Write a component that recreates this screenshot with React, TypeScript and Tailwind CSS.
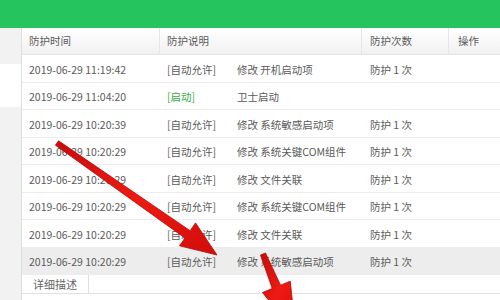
import React from "react";

type Row = { time: string; tag: string; green?: boolean; desc: string; count: string; sel?: boolean };

const rows: Row[] = [
  { time: "2019-06-29 11:19:42", tag: "[自动允许]", desc: "修改 开机启动项", count: "防护 1 次" },
  { time: "2019-06-29 11:04:20", tag: "[启动]", green: true, desc: "卫士启动", count: "" },
  { time: "2019-06-29 10:20:39", tag: "[自动允许]", desc: "修改 系统敏感启动项", count: "防护 1 次" },
  { time: "2019-06-29 10:20:29", tag: "[自动允许]", desc: "修改 系统关键COM组件", count: "防护 1 次" },
  { time: "2019-06-29 10:20:29", tag: "[自动允许]", desc: "修改 文件关联", count: "防护 1 次" },
  { time: "2019-06-29 10:20:29", tag: "[自动允许]", desc: "修改 系统关键COM组件", count: "防护 1 次" },
  { time: "2019-06-29 10:20:29", tag: "[自动允许]", desc: "修改 文件关联", count: "防护 1 次" },
  { time: "2019-06-29 10:20:29", tag: "[自动允许]", desc: "修改 系统敏感启动项", count: "防护 1 次", sel: true },
];

function arrowPoints(x1: number, y1: number, x2: number, y2: number, sw: number, hl: number, hw: number) {
  const dx = x2 - x1, dy = y2 - y1;
  const len = Math.hypot(dx, dy);
  const ux = dx / len, uy = dy / len;
  const nx = -uy, ny = ux;
  const bx = x2 - ux * hl, by = y2 - uy * hl;
  const p = [
    [x1 + nx * sw * 0.6, y1 + ny * sw * 0.6],
    [bx + nx * sw, by + ny * sw],
    [bx + nx * hw, by + ny * hw],
    [x2, y2],
    [bx - nx * hw, by - ny * hw],
    [bx - nx * sw, by - ny * sw],
    [x1 - nx * sw * 0.6, y1 - ny * sw * 0.6],
  ];
  return p.map((q) => q.join(",")).join(" ");
}

export default function App() {
  return (
    <div className="relative w-[500px] h-[300px] overflow-hidden bg-white text-[10.5px] text-[#5a5a5a]" style={{ fontFamily: '"Noto Sans CJK SC", "Noto Sans", sans-serif' }}>
      <div className="h-[28px] bg-[#26c45e]" />
      <div className="flex h-[272px]">
        <div className="w-[22px] shrink-0 border-r border-[#dedede] flex flex-col">
          <div className="h-[36px] bg-[#f2f2f2]" />
          <div className="h-[43px] bg-white" />
          <div className="flex-1 bg-[#f2f2f2]" />
        </div>
        <div className="flex-1 flex flex-col">
          <div className="flex h-[27px] shrink-0 bg-gradient-to-b from-white to-[#f1f1f1] border-b border-[#e4e4e4] items-center">
            <div className="w-[138px] pl-[7px] border-r border-[#e6e6e6] h-full flex items-center">防护时间</div>
            <div className="w-[202px] pl-[7px] border-r border-[#e6e6e6] h-full flex items-center">防护说明</div>
            <div className="w-[87px] pl-[8px] border-r border-[#e6e6e6] h-full flex items-center">防护次数</div>
            <div className="flex-1 pl-[9px] h-full flex items-center">操作</div>
          </div>
          {rows.map((r, i) => (
            <div key={i} className={`flex h-[27.5px] shrink-0 items-center border-b border-[#ececec] ${r.sel ? "bg-[#ededed]" : "bg-white"}`}>
              <div className="w-[138px] pl-[7px] pt-[3px]">{r.time}</div>
              <div className="w-[202px] pl-[7px] flex pt-[3px]">
                <span className={`w-[70px] ${r.green ? "text-[#3aa843]" : ""}`}>{r.tag}</span>
                <span>{r.desc}</span>
              </div>
              <div className="w-[87px] pl-[8px] pt-[3px]">{r.count}</div>
              <div className="flex-1" />
            </div>
          ))}
          <div className="flex h-[19px] shrink-0">
            <div className="w-[67px] border-r border-b border-[#e0e0e0] bg-white flex items-center justify-center text-[11px] text-[#666]">详细描述</div>
            <div className="flex-1 border-b border-[#e0e0e0]" />
          </div>
          <div className="flex-1" />
        </div>
      </div>
      <svg className="absolute inset-0 pointer-events-none" width="500" height="300">
        <defs>
          <linearGradient id="rg" x1="0" y1="0" x2="1" y2="1">
            <stop offset="0" stopColor="#c80c0c" />
            <stop offset="0.5" stopColor="#ee1a12" />
            <stop offset="1" stopColor="#d10d0a" />
          </linearGradient>
        </defs>
        <polygon points={arrowPoints(57, 143, 217, 255, 4.5, 36, 14)} fill="url(#rg)" stroke="#b30a0a" strokeWidth="0.8" strokeLinejoin="round" />
        <polygon points={arrowPoints(263, 254, 296, 335, 4.5, 52, 15)} fill="url(#rg)" stroke="#b30a0a" strokeWidth="0.8" strokeLinejoin="round" />
      </svg>
    </div>
  );
}
